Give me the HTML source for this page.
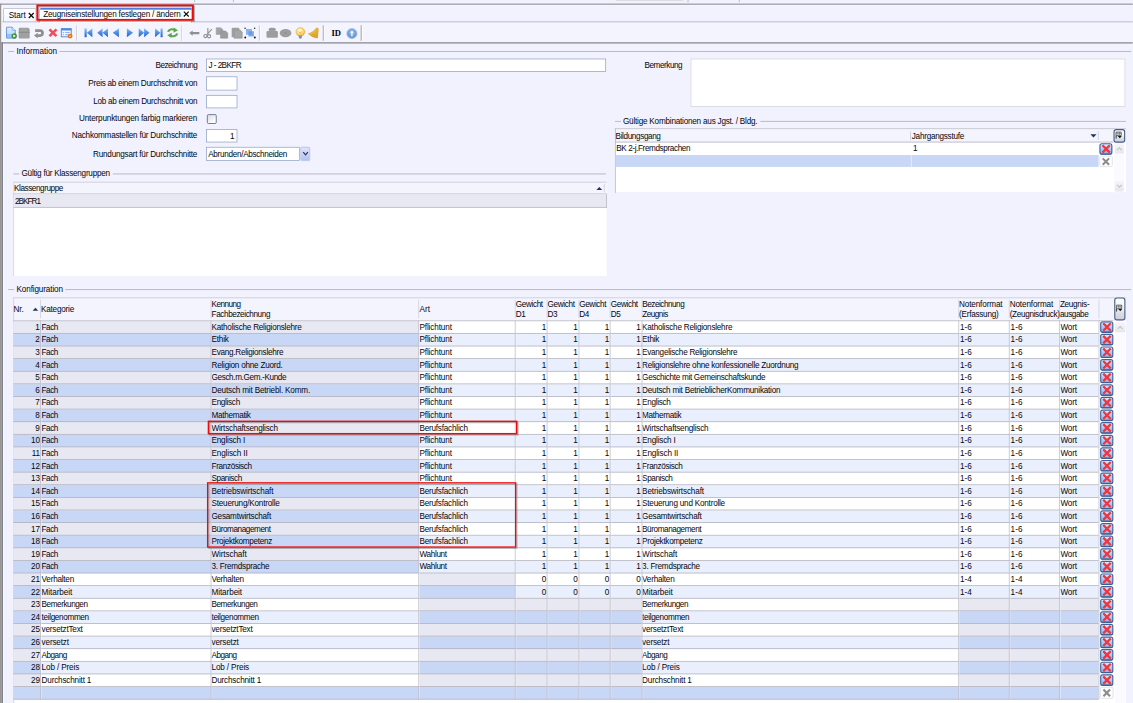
<!DOCTYPE html>
<html lang="de"><head><meta charset="utf-8"><title>Zeugniseinstellungen festlegen / ändern</title>
<style>
html,body{margin:0;padding:0;background:#f1f2fd;overflow:hidden}
body{width:1133px;height:703px;position:relative;font-family:"Liberation Sans",sans-serif;}
#app{position:absolute;left:0;top:0;width:1527.4px;height:948px;transform:scale(0.7418);transform-origin:0 0;background:#f1f2fd;overflow:hidden;font-size:11px;color:#06060c}
.a{position:absolute;box-sizing:border-box}
.t{position:absolute;white-space:pre;line-height:13px;height:13px;font-size:11px}
svg{position:absolute;overflow:visible}
</style></head><body><div id="app">
<div class="a" style="left:0px;top:5px;width:1528px;height:1px;background:#6c6c6c"></div>
<div class="a" style="left:0px;top:6px;width:1528px;height:1px;background:#a6a6aa"></div>
<div class="a" style="left:2px;top:7px;width:1526px;height:1px;background:#fbfbff"></div>
<div class="a" style="left:0px;top:5px;width:2px;height:943px;background:#989593"></div>
<div class="a" style="left:2px;top:7px;width:1px;height:50px;background:#fdfdff"></div>
<div class="a" style="left:262px;top:0px;width:1px;height:3px;background:#a9a9b3"></div>
<div class="a" style="left:314px;top:0px;width:1px;height:3px;background:#a9a9b3"></div>
<div class="a" style="left:927px;top:0px;width:1px;height:3px;background:#a9a9b3"></div>
<div class="a" style="left:996px;top:0px;width:1px;height:3px;background:#a9a9b3"></div>
<div class="a" style="left:830px;top:0px;width:91px;height:1px;background:#d3d4de"></div>
<div class="a " style="left:4.31px;top:10.65px;width:44.76px;height:19.41px;border:1px solid #a9b4cd;border-bottom:none;background:linear-gradient(#ffffff,#f3f4fd);border-radius:2px 2px 0 0"></div>
<div class="t" style="left:11.73px;top:14px;letter-spacing:-0.043px;">Start</div>
<svg style="left:37.61px;top:16.58px" width="8.22" height="7.82" viewBox="0 0 8 8"><path d="M0.6 0.6 L7.4 7.4 M7.4 0.6 L0.6 7.4" stroke="#0a0a0a" stroke-width="1.65" fill="none"/></svg>
<div class="a" style="left:3px;top:29px;width:1525px;height:1px;background:#9fa9c4"></div>
<div class="a" style="left:3px;top:30px;width:1525px;height:1px;background:#dfe3f1"></div>
<div class="a " style="left:53.11px;top:10.51px;width:205.99px;height:20.36px;border:1px solid #8fa0c4;border-bottom:none;background:#fff;border-radius:2px 2px 0 0"></div>
<div class="a " style="left:53.65px;top:10.65px;width:204.91px;height:2.7px;background:linear-gradient(#2457d6,#5c8cf0);border-radius:2px 2px 0 0"></div>
<div class="t" style="left:58.24px;top:13px;letter-spacing:-0.256px;">Zeugniseinstellungen festlegen / ändern</div>
<svg style="left:247.24px;top:14.69px" width="8.22" height="7.82" viewBox="0 0 8 8"><path d="M0.6 0.6 L7.4 7.4 M7.4 0.6 L0.6 7.4" stroke="#0a0a0a" stroke-width="1.65" fill="none"/></svg>
<div class="a" style="left:3px;top:31px;width:1525px;height:26px;background:#f3f4fe"></div>
<div class="a" style="left:2px;top:57px;width:1526px;height:1px;background:#85858d"></div>
<div class="a" style="left:2px;top:58px;width:1526px;height:1px;background:#a9a9b3"></div>
<div class="a" style="left:2px;top:57px;width:2px;height:891px;background:#767e8a"></div>
<div class="a" style="left:4px;top:59px;width:1px;height:889px;background:#fbfbff"></div>
<div class="a " style="left:102.52px;top:33.97px;width:1.21px;height:20.76px;background:#bdbdc7"></div>
<div class="a " style="left:103.8px;top:33.97px;width:1.08px;height:20.76px;background:#ffffff"></div>
<div class="a " style="left:244.07px;top:33.97px;width:1.21px;height:20.76px;background:#bdbdc7"></div>
<div class="a " style="left:245.35px;top:33.97px;width:1.08px;height:20.76px;background:#ffffff"></div>
<div class="a " style="left:349.22px;top:33.97px;width:1.21px;height:20.76px;background:#bdbdc7"></div>
<div class="a " style="left:350.5px;top:33.97px;width:1.08px;height:20.76px;background:#ffffff"></div>
<div class="a " style="left:435.49px;top:33.97px;width:1.21px;height:20.76px;background:#bdbdc7"></div>
<div class="a " style="left:436.78px;top:33.97px;width:1.08px;height:20.76px;background:#ffffff"></div>
<div class="a " style="left:486.45px;top:33.97px;width:1.21px;height:20.76px;background:#bdbdc7"></div>
<div class="a " style="left:487.73px;top:33.97px;width:1.08px;height:20.76px;background:#ffffff"></div>
<svg width="0" height="0" style="left:0;top:0"><defs><linearGradient id="gb" x1="0" y1="0" x2="0" y2="1"><stop offset="0" stop-color="#8fc0fa"/><stop offset="0.5" stop-color="#4a8ce8"/><stop offset="1" stop-color="#245fcf"/></linearGradient><linearGradient id="gp" x1="0" y1="0" x2="0" y2="1"><stop offset="0" stop-color="#e6f1fd"/><stop offset="0.6" stop-color="#c3dcf9"/><stop offset="0.62" stop-color="#86c1f5"/><stop offset="1" stop-color="#9fd0f8"/></linearGradient><radialGradient id="gh" cx="0.5" cy="0.4" r="0.6"><stop offset="0" stop-color="#a8c9ee"/><stop offset="1" stop-color="#4f86cc"/></radialGradient><radialGradient id="gl" cx="0.45" cy="0.4" r="0.6"><stop offset="0" stop-color="#fffef0"/><stop offset="0.5" stop-color="#ffe88e"/><stop offset="1" stop-color="#f6a92c"/></radialGradient><linearGradient id="gg" x1="0" y1="0" x2="1" y2="1"><stop offset="0" stop-color="#f6d25a"/><stop offset="1" stop-color="#d99a16"/></linearGradient><linearGradient id="gx" x1="0" y1="0" x2="0" y2="1"><stop offset="0" stop-color="#e2eefd"/><stop offset="0.5" stop-color="#a9caf5"/><stop offset="1" stop-color="#8ab4ef"/></linearGradient><linearGradient id="gc" x1="0" y1="0" x2="0" y2="1"><stop offset="0" stop-color="#ffffff"/><stop offset="0.4" stop-color="#f6f6fa"/><stop offset="0.7" stop-color="#dcdce4"/><stop offset="1" stop-color="#cfcfda"/></linearGradient></defs></svg>
<svg style="left:7.55px;top:36.4px" width="14.83" height="16.18" viewBox="0 0 11 12" preserveAspectRatio="none"><path d="M0.6 0.5 H6.2 L9.4 3.6 V11.4 H0.6 Z" fill="url(#gp)" stroke="#5f93df" stroke-width="0.9" stroke-linejoin="round"/><path d="M6.2 0.5 V3.6 H9.4" fill="#f4f9ff" stroke="#5f93df" stroke-width="0.7"/><circle cx="8.3" cy="9.3" r="2.5" fill="#3f9a2e"/><circle cx="8.3" cy="9.3" r="2.5" fill="none" stroke="#2d7a20" stroke-width="0.4"/><path d="M7.4 7.9 L9.8 9.3 L7.4 10.7 Z" fill="#fff"/></svg>
<svg style="left:25.48px;top:36.8px" width="15.23" height="15.23" viewBox="0 0 12 12" preserveAspectRatio="none"><path d="M1 0.2 H10 L11.8 1.6 V11 A0.8 0.8 0 0 1 11 11.8 H1 A0.8 0.8 0 0 1 0.2 11 V1 A0.8 0.8 0 0 1 1 0.2 Z" fill="#9d9d9d"/><rect x="2.2" y="0.6" width="7" height="3.6" fill="#a3a3a3"/><rect x="1.6" y="6" width="8.8" height="5.2" fill="#a0a0a0"/><rect x="0.2" y="4.7" width="11.6" height="1" fill="#8a8a8a"/></svg>
<svg style="left:45.56px;top:39.36px" width="13.48" height="11.86" viewBox="0 0 10 9" preserveAspectRatio="none"><path d="M1.0 1.7 H5.9 A2.55 2.55 0 0 1 5.9 6.8 H3.2" fill="none" stroke="#8f8f8f" stroke-width="2.7"/><path d="M-0.1 6.8 L3.6 3.9 V9.6 Z" fill="#8f8f8f"/></svg>
<svg style="left:64.71px;top:38.29px" width="12.81" height="12.4" viewBox="0 0 10 10" preserveAspectRatio="none"><path d="M1.3 1.3 L8.7 8.7 M8.7 1.3 L1.3 8.7" stroke="#f04d58" stroke-width="2.7" fill="none"/></svg>
<svg style="left:81.83px;top:38.29px" width="16.04" height="14.02" viewBox="0 0 12 10.5" preserveAspectRatio="none"><rect x="0.5" y="0.5" width="10" height="8.2" fill="#f0f5fd" stroke="#5a8ee0" stroke-width="1"/><rect x="0.5" y="0.3" width="10" height="2" fill="#4d86e0"/><path d="M2 4.4 H3.4 M4.6 4.4 H9 M2 6.6 H3.4 M4.6 6.6 H7" stroke="#7aa4e6" stroke-width="0.9"/><circle cx="9.3" cy="8" r="2.5" fill="#e67418"/><rect x="8.3" y="7.5" width="2" height="1" fill="#ffd9a8"/></svg>
<svg style="left:113.78px;top:38.29px" width="10.51" height="12.54" viewBox="0 0 8 10" preserveAspectRatio="none"><rect x="0" y="0.3" width="2.2" height="9.4" fill="url(#gb)"/><path d="M8 0.2 V9.8 L2.4 5 Z" fill="url(#gb)"/></svg>
<svg style="left:130.76px;top:38.29px" width="14.56" height="12.54" viewBox="0 0 10.8 10" preserveAspectRatio="none"><path d="M5.4 0.2 V9.8 L0 5 Z M10.8 0.2 V9.8 L5.4 5 Z" fill="url(#gb)"/></svg>
<svg style="left:152.33px;top:38.29px" width="8.36" height="12.54" viewBox="0 0 6.2 10" preserveAspectRatio="none"><path d="M6.2 0.2 V9.8 L0 5 Z" fill="url(#gb)"/></svg>
<svg style="left:171.21px;top:38.29px" width="8.36" height="12.54" viewBox="0 0 6.2 10" preserveAspectRatio="none"><path d="M0 0.2 V9.8 L6.2 5 Z" fill="url(#gb)"/></svg>
<svg style="left:187.11px;top:38.29px" width="14.56" height="12.54" viewBox="0 0 10.8 10" preserveAspectRatio="none"><path d="M0 0.2 V9.8 L5.4 5 Z M5.4 0.2 V9.8 L10.8 5 Z" fill="url(#gb)"/></svg>
<svg style="left:208.68px;top:38.29px" width="10.25" height="12.54" viewBox="0 0 8 10" preserveAspectRatio="none"><rect x="5.8" y="0.3" width="2.2" height="9.4" fill="url(#gb)"/><path d="M0 0.2 V9.8 L5.6 5 Z" fill="url(#gb)"/></svg>
<svg style="left:225.13px;top:37.48px" width="15.37" height="14.29" viewBox="0 0 12 11" preserveAspectRatio="none"><path d="M1.2 4.6 A4.4 3.2 0 0 1 8.2 2.6" fill="none" stroke="#5aa84a" stroke-width="2.2"/><path d="M7.2 0 L11.6 2.8 L7.0 5.4 Z" fill="#5aa84a"/><path d="M10.8 6.4 A4.4 3.2 0 0 1 3.8 8.4" fill="none" stroke="#5aa84a" stroke-width="2.2"/><path d="M4.8 11 L0.4 8.2 L5.0 5.6 Z" fill="#5aa84a"/></svg>
<svg style="left:254.79px;top:41.25px" width="13.75" height="7.28" viewBox="0 0 10 5.4" preserveAspectRatio="none"><path d="M0 2.7 L3.4 0 V1.6 H10 V3.8 H3.4 V5.4 Z" fill="#8f8f8f"/></svg>
<svg style="left:274.2px;top:37.48px" width="12.67" height="14.83" viewBox="0 0 9.4 11" preserveAspectRatio="none"><path d="M4.6 0.6 L4.6 6.6 M8.6 1.6 L3.4 7.4" stroke="#8f8f8f" stroke-width="1.1" fill="none"/><circle cx="2.2" cy="8.6" r="1.6" fill="none" stroke="#8f8f8f" stroke-width="1.1"/><circle cx="5.8" cy="8.8" r="1.6" fill="none" stroke="#8f8f8f" stroke-width="1.1"/></svg>
<svg style="left:291.18px;top:37.48px" width="16.45" height="14.83" viewBox="0 0 12 11" preserveAspectRatio="none"><path d="M0.3 0.3 H5 L7 2.2 V7 H0.3 Z" fill="#a3a3a3" stroke="#9d9d9d" stroke-width="0.5"/><path d="M4.6 3.6 H9.6 L11.7 5.6 V10.7 H4.6 Z" fill="#9c9c9c" stroke="#8e8e8e" stroke-width="0.5"/></svg>
<svg style="left:310.6px;top:37.48px" width="15.91" height="14.83" viewBox="0 0 12 11" preserveAspectRatio="none"><path d="M1 1.4 Q1 0.4 2 0.4 H7.6 Q8.8 0.4 8.8 1.4 V9.8 H1 Z" fill="#a0a0a0"/><path d="M3.4 2.6 H9.6 L11.7 4.6 V10.7 H3.4 Z" fill="#a6a6a6" stroke="#8e8e8e" stroke-width="0.6"/></svg>
<svg style="left:329.47px;top:37.48px" width="16.18" height="14.83" viewBox="0 0 12 11" preserveAspectRatio="none"><rect x="2.2" y="1.8" width="5.4" height="5" fill="#8db4f0" stroke="#6a9be6" stroke-width="0.5"/><rect x="4.4" y="3.8" width="5.4" height="5.2" fill="#5f92e6" opacity="0.8"/><circle cx="1" cy="0.9" r="0.75" fill="#222"/><circle cx="10.6" cy="0.9" r="0.75" fill="#222"/><circle cx="1.2" cy="10" r="0.95" fill="#111"/><circle cx="10.8" cy="10" r="0.95" fill="#111"/></svg>
<svg style="left:358.59px;top:37.48px" width="15.91" height="14.56" viewBox="0 0 12 11" preserveAspectRatio="none"><path d="M2.6 4 V2 Q2.6 0.3 4.4 0.3 H7.6 Q9.4 0.3 9.4 2 V4 Z" fill="#a2a2a2"/><path d="M1.2 3.6 H10.8 Q11.8 3.6 11.8 4.8 V9.6 Q11.8 10.6 10.8 10.6 H1.2 Q0.2 10.6 0.2 9.6 V4.8 Q0.2 3.6 1.2 3.6 Z" fill="#9d9d9d"/><rect x="2.4" y="1.4" width="7.2" height="0.8" fill="#8e8e8e"/></svg>
<svg style="left:377.46px;top:39.09px" width="15.91" height="11.32" viewBox="0 0 12 8.4" preserveAspectRatio="none"><ellipse cx="6" cy="4.2" rx="5.9" ry="4.1" fill="#9d9d9d"/><ellipse cx="6" cy="4" rx="1.1" ry="0.7" fill="#8a8a8a"/></svg>
<svg style="left:397.68px;top:36.94px" width="13.75" height="15.1" viewBox="0 0 10 11.2" preserveAspectRatio="none"><circle cx="5" cy="4.4" r="4.3" fill="url(#gl)" stroke="#f0a030" stroke-width="0.5"/><path d="M3.6 4 L5 6 L6.4 4" stroke="#f08a18" stroke-width="0.7" fill="none"/><rect x="3.4" y="8" width="3.2" height="2.2" fill="#8e949e"/><rect x="4" y="10" width="2" height="1" fill="#55606e"/></svg>
<svg style="left:415.21px;top:36.67px" width="15.37" height="15.37" viewBox="0 0 11.4 11.4" preserveAspectRatio="none"><path d="M8.6 0.6 Q10.6 0 10.4 2 L9.6 10.6 Q5 10.4 0.4 6.4 Q5.6 5 8.6 0.6 Z" fill="url(#gg)" stroke="#c98f14" stroke-width="0.5"/><ellipse cx="5.4" cy="8" rx="1.6" ry="1.1" fill="#e9b93a" stroke="#b8800e" stroke-width="0.4"/></svg>
<div class="t" style="left:447.02px;top:39.09px;font-family:'Liberation Serif',serif;font-weight:bold;font-size:11.5px;letter-spacing:-0.3px;color:#000">ID</div>
<svg style="left:466.97px;top:37.75px" width="14.83" height="14.56" viewBox="0 0 11 11" preserveAspectRatio="none"><circle cx="5.5" cy="5.5" r="5.1" fill="url(#gh)" stroke="#a9c4e8" stroke-width="0.9"/><circle cx="5.5" cy="4.1" r="1.25" fill="#f4f8ff"/><path d="M5.5 4.6 V8.4" stroke="#f4f8ff" stroke-width="1.2" fill="none"/></svg>
<div class="a" style="left:11px;top:69px;width:8px;height:1px;background:#a7a7b1"></div>
<div class="a" style="left:80px;top:69px;width:1445px;height:1px;background:#a7a7b1"></div>
<div class="t" style="left:22.24px;top:63px;letter-spacing:-0.047px;">Information</div>
<div class="a" style="left:18px;top:234px;width:8px;height:1px;background:#a7a7b1"></div>
<div class="a" style="left:152px;top:234px;width:665px;height:1px;background:#a7a7b1"></div>
<div class="t" style="left:28.98px;top:227px;letter-spacing:-0.322px;">Gültig für Klassengruppen</div>
<div class="a" style="left:829px;top:163px;width:8px;height:1px;background:#a7a7b1"></div>
<div class="a" style="left:1025px;top:163px;width:493px;height:1px;background:#a7a7b1"></div>
<div class="t" style="left:839.85px;top:157px;letter-spacing:-0.296px;">Gültige Kombinationen aus Jgst. / Bldg.</div>
<div class="a" style="left:11px;top:390px;width:8px;height:1px;background:#a7a7b1"></div>
<div class="a" style="left:88px;top:390px;width:1437px;height:1px;background:#a7a7b1"></div>
<div class="t" style="left:22.24px;top:384px;letter-spacing:-0.172px;">Konfiguration</div>
<div class="t" style="right:1261.32px;top:82px;letter-spacing:-0.641px;">Bezeichnung</div>
<div class="a " style="left:277.57px;top:78.73px;width:539.9px;height:18.47px;border:1px solid #8ea2c6;background:#fff;"></div>
<div class="t" style="left:281.21px;top:82px;letter-spacing:-0.776px;">J - 2BKFR</div>
<div class="t" style="right:1261.59px;top:106px;letter-spacing:-0.374px;">Preis ab einem Durchschnitt von</div>
<div class="a " style="left:277.57px;top:103.26px;width:42.6px;height:18.33px;border:1px solid #8ea2c6;background:#fff;"></div>
<div class="t" style="right:1261.56px;top:130px;letter-spacing:-0.401px;">Lob ab einem Durchschnitt von</div>
<div class="a " style="left:277.57px;top:127.8px;width:42.6px;height:18.2px;border:1px solid #8ea2c6;background:#fff;"></div>
<div class="t" style="right:1261.72px;top:153px;letter-spacing:-0.244px;">Unterpunktungen farbig markieren</div>
<div class="a " style="left:279.19px;top:153.68px;width:12.94px;height:12.94px;border:1px solid #41567f;border-radius:2px;background:linear-gradient(135deg,#d9d9e0,#ffffff 80%)"></div>
<div class="t" style="right:1261.65px;top:176px;letter-spacing:-0.317px;">Nachkommastellen für Durchschnitte</div>
<div class="a " style="left:277.57px;top:174.04px;width:42.6px;height:18.33px;border:1px solid #8ea2c6;background:#fff;"></div>
<div class="t" style="right:1211.14px;top:177px;letter-spacing:0px;">1</div>
<div class="t" style="right:1261.66px;top:202px;letter-spacing:-0.307px;">Rundungsart für Durchschnitte</div>
<div class="a " style="left:277.57px;top:198.44px;width:126.58px;height:18.2px;border:1px solid #8ea2c6;background:#fff;"></div>
<div class="t" style="left:280.67px;top:202px;letter-spacing:-0.407px;">Abrunden/Abschneiden</div>
<div class="a " style="left:404.96px;top:198.44px;width:13.48px;height:18.2px;border:1px solid #a9b7e2;background:linear-gradient(#dde4f9,#b4c2ee);border-radius:1.5px"></div>
<svg style="left:407.93px;top:204.37px" width="7.82" height="6.2" viewBox="0 0 8 6"><path d="M0.8 1 L4 4.6 L7.2 1" stroke="#22345f" stroke-width="1.6" fill="none"/></svg>
<div class="t" style="right:607.81px;top:82px;letter-spacing:-0.61px;">Bemerkung</div>
<div class="a " style="left:930.57px;top:78.73px;width:586.82px;height:65.38px;border:1px solid #d0d1dc;background:#fff"></div>
<div class="a " style="left:17.93px;top:244.81px;width:799.81px;height:127.66px;background:#fff"></div>
<div class="a " style="left:17.93px;top:244.81px;width:799.81px;height:16.72px;background:#f3f4fe"></div>
<div class="a" style="left:18px;top:245px;width:800px;height:1px;background:#c4c4cd"></div>
<div class="a" style="left:18px;top:245px;width:1px;height:127px;background:#d2d2da"></div>
<div class="a" style="left:18px;top:261px;width:800px;height:1px;background:#aeaeb9"></div>
<div class="t" style="left:18.87px;top:247px;letter-spacing:-0.57px;">Klassengruppe</div>
<svg style="left:804.26px;top:251.55px" width="7.82" height="4.31" viewBox="0 0 10 5"><path d="M0 5 L5 0 L10 5 Z" fill="#1d3557"/></svg>
<div class="a" style="left:814px;top:248px;width:1px;height:11px;background:#c9c9d2"></div>
<div class="a " style="left:18.6px;top:262.2px;width:798.6px;height:16.85px;background:#e8e8f2"></div>
<div class="a" style="left:18px;top:279px;width:800px;height:1px;background:#aeaeb9"></div>
<div class="a" style="left:817px;top:262px;width:1px;height:18px;background:#aeaeb9"></div>
<div class="t" style="left:20.22px;top:265px;letter-spacing:-1.321px;">2BKFR1</div>
<div class="a " style="left:829.33px;top:173.23px;width:688.6px;height:86.28px;background:#fff"></div>
<div class="a " style="left:829.33px;top:173.23px;width:671.61px;height:18.6px;background:#f3f4fe"></div>
<div class="a " style="left:1500.94px;top:173.23px;width:16.99px;height:19.55px;background:#f1f2fd"></div>
<div class="a" style="left:829px;top:173px;width:689px;height:1px;background:#bcbcc6"></div>
<div class="a" style="left:829px;top:173px;width:1px;height:87px;background:#b4b4be"></div>
<div class="a" style="left:829px;top:191px;width:672px;height:1px;background:#aeaeb9"></div>
<div class="t" style="left:829.87px;top:177px;letter-spacing:-0.507px;">Bildungsgang</div>
<div class="a" style="left:1227px;top:177px;width:1px;height:12px;background:#c9c9d2"></div>
<div class="t" style="left:1229.17px;top:177px;letter-spacing:-0.342px;">Jahrgangsstufe</div>
<svg style="left:1469.53px;top:181.05px" width="8.22" height="4.31" viewBox="0 0 10 5"><path d="M0 0 L5 5 L10 0 Z" fill="#1d3557"/></svg>
<div class="a" style="left:1480px;top:177px;width:1px;height:12px;background:#c9c9d2"></div>
<div class="t" style="left:830.68px;top:194px;letter-spacing:-0.522px;">BK 2-j.Fremdsprachen</div>
<div class="t" style="left:1230.79px;top:194px;letter-spacing:0px;">1</div>
<div class="a " style="left:830.28px;top:209.49px;width:650.44px;height:15.77px;background:#c9d7f6"></div>
<div class="a" style="left:1228px;top:209px;width:1px;height:16px;background:#eef1fc"></div>
<svg style="left:1482.07px;top:192.77px" width="17.66" height="16.04" viewBox="0 0 17.66 16.04"><rect x="0.8" y="0.8" width="16.06" height="14.14" rx="2.6" fill="url(#gx)" stroke="#42639a" stroke-width="1.6"/><path d="M1.6 14.54 H16.06" stroke="#3b5a8f" stroke-width="1.2"/><path d="M4.15 2.73 L14.13 12.83 M14.13 2.73 L4.15 12.83" stroke="#f2343f" stroke-width="3.1" fill="none"/></svg>
<div class="a" style="left:1482.34px;top:210.3px;width:17.26px;height:15.1px;border:1px solid #dcdce2;border-radius:2px;background:#fdfdfd"><svg style="left:1.8px;top:0.8px" width="11.66" height="11.5" viewBox="0 0 10 10" preserveAspectRatio="none"><path d="M1.3 1.3 L8.7 8.7 M8.7 1.3 L1.3 8.7" stroke="#8c8c8c" stroke-width="2.4" fill="none"/></svg></div>
<div class="a " style="left:1502.29px;top:192.77px;width:12.94px;height:65.79px;background:#fafaff"></div>
<div class="a " style="left:1502.83px;top:193.31px;width:11.86px;height:14.15px;background:linear-gradient(#f6f6fa,#e6e6ec);border-radius:1.5px"></div>
<svg style="left:1504.72px;top:197.69px" width="8.09" height="5.66" viewBox="0 0 8 5.6"><path d="M0.8 4.4 L4 1.2 L7.2 4.4" stroke="#c3c3c8" stroke-width="1.5" fill="none"/></svg>
<div class="a " style="left:1502.83px;top:243.87px;width:11.86px;height:14.15px;background:linear-gradient(#f6f6fa,#e6e6ec);border-radius:1.5px"></div>
<svg style="left:1504.72px;top:248.25px" width="8.09" height="5.66" viewBox="0 0 8 5.6"><path d="M0.8 1.2 L4 4.4 L7.2 1.2" stroke="#c3c3c8" stroke-width="1.5" fill="none"/></svg>
<svg style="left:1500.67px;top:173.9px" width="15.91" height="18.47" viewBox="0 0 15.91 18.47"><rect x="0.8" y="0.8" width="14.31" height="16.87" rx="3" fill="url(#gc)" stroke="#465d85" stroke-width="1.5"/><g transform="translate(2.55,3.63) scale(0.88)"><path d="M1 0.5 H9 V6 H1 Z" fill="#fff" stroke="#222" stroke-width="1"/><path d="M1 3 H9 M4 0.5 V6 M6.5 0.5 V6" stroke="#333" stroke-width="0.7"/><path d="M1.2 6 V10.3" stroke="#111" stroke-width="1.3"/><path d="M3.8 6.6 H9.8 L6.8 9.8 Z" fill="#111"/></g></svg>
<div class="a " style="left:17.93px;top:401.05px;width:1500.54px;height:546.64px;background:#fff"></div>
<div class="a " style="left:17.93px;top:401.05px;width:1483.28px;height:31.45px;background:#f3f4fe"></div>
<div class="a " style="left:1501.21px;top:401.05px;width:17.26px;height:32.35px;background:#f1f2fd"></div>
<div class="a " style="left:1518.47px;top:400.38px;width:8.9px;height:547.32px;background:#f1f2fd"></div>
<div class="a" style="left:18px;top:401px;width:1500px;height:1px;background:#c4c4cd"></div>
<div class="a" style="left:18px;top:401px;width:1px;height:547px;background:#c9c9d2"></div>
<div class="a" style="left:54px;top:404px;width:1px;height:25px;background:#cdcdd6"></div>
<div class="a" style="left:284px;top:404px;width:1px;height:25px;background:#cdcdd6"></div>
<div class="a" style="left:564px;top:404px;width:1px;height:25px;background:#cdcdd6"></div>
<div class="a" style="left:694px;top:404px;width:1px;height:25px;background:#cdcdd6"></div>
<div class="a" style="left:737px;top:404px;width:1px;height:25px;background:#cdcdd6"></div>
<div class="a" style="left:780px;top:404px;width:1px;height:25px;background:#cdcdd6"></div>
<div class="a" style="left:822px;top:404px;width:1px;height:25px;background:#cdcdd6"></div>
<div class="a" style="left:865px;top:404px;width:1px;height:25px;background:#cdcdd6"></div>
<div class="a" style="left:1292px;top:404px;width:1px;height:25px;background:#cdcdd6"></div>
<div class="a" style="left:1360px;top:404px;width:1px;height:25px;background:#cdcdd6"></div>
<div class="a" style="left:1428px;top:404px;width:1px;height:25px;background:#cdcdd6"></div>
<div class="a" style="left:1481px;top:404px;width:1px;height:25px;background:#cdcdd6"></div>
<div class="t" style="left:18.06px;top:411px;letter-spacing:-0.043px;">Nr.</div>
<svg style="left:43.95px;top:415.21px" width="7.55" height="3.77" viewBox="0 0 10 5"><path d="M0 5 L5 0 L10 5 Z" fill="#1d3557"/></svg>
<div class="t" style="left:55.27px;top:411px;letter-spacing:-0.297px;">Kategorie</div>
<div class="t" style="left:285.25px;top:404px;letter-spacing:-0.714px;">Kennung</div>
<div class="t" style="left:285.25px;top:417px;letter-spacing:-0.538px;">Fachbezeichnung</div>
<div class="t" style="left:565.52px;top:411px;letter-spacing:0.07px;">Art</div>
<div class="t" style="left:695.34px;top:404px;letter-spacing:-0.483px;">Gewicht</div>
<div class="t" style="left:695.34px;top:417px;letter-spacing:-0.491px;">D1</div>
<div class="t" style="left:738.2px;top:404px;letter-spacing:-0.483px;">Gewicht</div>
<div class="t" style="left:738.2px;top:417px;letter-spacing:-0.491px;">D3</div>
<div class="t" style="left:780.8px;top:404px;letter-spacing:-0.483px;">Gewicht</div>
<div class="t" style="left:780.8px;top:417px;letter-spacing:-0.491px;">D4</div>
<div class="t" style="left:823.4px;top:404px;letter-spacing:-0.483px;">Gewicht</div>
<div class="t" style="left:823.4px;top:417px;letter-spacing:-0.491px;">D5</div>
<div class="t" style="left:865.87px;top:404px;letter-spacing:-0.641px;">Bezeichnung</div>
<div class="t" style="left:865.87px;top:417px;letter-spacing:-0.687px;">Zeugnis</div>
<div class="t" style="left:1292.8px;top:404px;letter-spacing:-0.179px;">Notenformat</div>
<div class="t" style="left:1292.8px;top:417px;letter-spacing:-0.334px;">(Erfassung)</div>
<div class="t" style="left:1361.15px;top:404px;letter-spacing:-0.179px;">Notenformat</div>
<div class="t" style="left:1361.15px;top:417px;letter-spacing:-0.432px;">(Zeugnisdruck)</div>
<div class="t" style="left:1428.82px;top:404px;letter-spacing:-0.386px;">Zeugnis-</div>
<div class="t" style="left:1428.82px;top:417px;letter-spacing:-0.547px;">ausgabe</div>
<svg style="left:1502.16px;top:401.46px" width="15.23" height="31.01" viewBox="0 0 15.23 31.01"><rect x="0.8" y="0.8" width="13.63" height="29.41" rx="3" fill="url(#gc)" stroke="#465d85" stroke-width="1.5"/><g transform="translate(2.21,9.91) scale(0.88)"><path d="M1 0.5 H9 V6 H1 Z" fill="#fff" stroke="#222" stroke-width="1"/><path d="M1 3 H9 M4 0.5 V6 M6.5 0.5 V6" stroke="#333" stroke-width="0.7"/><path d="M1.2 6 V10.3" stroke="#111" stroke-width="1.3"/><path d="M3.8 6.6 H9.8 L6.8 9.8 Z" fill="#111"/></g></svg>
<div class="a " style="left:17.93px;top:432.5px;width:546.64px;height:17.0px;background:#e8e8f2"></div>
<div class="a " style="left:564.57px;top:432.5px;width:916.82px;height:17.0px;background:#ffffff"></div>
<div class="t" style="right:1473.61px;top:435px;letter-spacing:0px;">1</div>
<div class="t" style="left:56.08px;top:435px;letter-spacing:-0.661px;">Fach</div>
<div class="t" style="left:285.12px;top:435px;letter-spacing:-0.314px;">Katholische Religionslehre</div>
<div class="t" style="left:565.38px;top:435px;letter-spacing:-0.153px;">Pflichtunt</div>
<div class="t" style="right:791.08px;top:435px;letter-spacing:0px;">1</div>
<div class="t" style="right:748.48px;top:435px;letter-spacing:0px;">1</div>
<div class="t" style="right:705.88px;top:435px;letter-spacing:0px;">1</div>
<div class="t" style="right:663.56px;top:435px;letter-spacing:0px;">1</div>
<div class="t" style="left:865.6px;top:435px;letter-spacing:-0.314px;">Katholische Religionslehre</div>
<div class="t" style="left:1294.15px;top:435px;letter-spacing:0.079px;">1-6</div>
<div class="t" style="left:1362.36px;top:435px;letter-spacing:0.079px;">1-6</div>
<div class="t" style="left:1429.5px;top:435px;letter-spacing:-0.225px;">Wort</div>
<svg style="left:1482.88px;top:433.11px" width="17.93" height="16.06" viewBox="0 0 17.93 16.06"><rect x="0.8" y="0.8" width="16.33" height="14.16" rx="2.6" fill="url(#gx)" stroke="#42639a" stroke-width="1.6"/><path d="M1.6 14.56 H16.33" stroke="#3b5a8f" stroke-width="1.2"/><path d="M4.21 2.73 L14.34 12.85 M14.34 2.73 L4.21 12.85" stroke="#f2343f" stroke-width="3.1" fill="none"/></svg>
<div class="a " style="left:17.93px;top:449.5px;width:546.64px;height:17.0px;background:#c9d7f6"></div>
<div class="a " style="left:564.57px;top:449.5px;width:916.82px;height:17.0px;background:#e9effd"></div>
<div class="t" style="right:1473.61px;top:451px;letter-spacing:0px;">2</div>
<div class="t" style="left:56.08px;top:451px;letter-spacing:-0.661px;">Fach</div>
<div class="t" style="left:285.12px;top:451px;letter-spacing:-0.265px;">Ethik</div>
<div class="t" style="left:565.38px;top:451px;letter-spacing:-0.153px;">Pflichtunt</div>
<div class="t" style="right:791.08px;top:451px;letter-spacing:0px;">1</div>
<div class="t" style="right:748.48px;top:451px;letter-spacing:0px;">1</div>
<div class="t" style="right:705.88px;top:451px;letter-spacing:0px;">1</div>
<div class="t" style="right:663.56px;top:451px;letter-spacing:0px;">1</div>
<div class="t" style="left:865.6px;top:451px;letter-spacing:-0.265px;">Ethik</div>
<div class="t" style="left:1294.15px;top:451px;letter-spacing:0.079px;">1-6</div>
<div class="t" style="left:1362.36px;top:451px;letter-spacing:0.079px;">1-6</div>
<div class="t" style="left:1429.5px;top:451px;letter-spacing:-0.225px;">Wort</div>
<svg style="left:1482.88px;top:450.11px" width="17.93" height="16.06" viewBox="0 0 17.93 16.06"><rect x="0.8" y="0.8" width="16.33" height="14.16" rx="2.6" fill="url(#gx)" stroke="#42639a" stroke-width="1.6"/><path d="M1.6 14.56 H16.33" stroke="#3b5a8f" stroke-width="1.2"/><path d="M4.21 2.73 L14.34 12.85 M14.34 2.73 L4.21 12.85" stroke="#f2343f" stroke-width="3.1" fill="none"/></svg>
<div class="a " style="left:17.93px;top:466.5px;width:546.64px;height:17.0px;background:#e8e8f2"></div>
<div class="a " style="left:564.57px;top:466.5px;width:916.82px;height:17.0px;background:#ffffff"></div>
<div class="t" style="right:1473.61px;top:469px;letter-spacing:0px;">3</div>
<div class="t" style="left:56.08px;top:469px;letter-spacing:-0.661px;">Fach</div>
<div class="t" style="left:285.12px;top:469px;letter-spacing:-0.364px;">Evang.Religionslehre</div>
<div class="t" style="left:565.38px;top:469px;letter-spacing:-0.153px;">Pflichtunt</div>
<div class="t" style="right:791.08px;top:469px;letter-spacing:0px;">1</div>
<div class="t" style="right:748.48px;top:469px;letter-spacing:0px;">1</div>
<div class="t" style="right:705.88px;top:469px;letter-spacing:0px;">1</div>
<div class="t" style="right:663.56px;top:469px;letter-spacing:0px;">1</div>
<div class="t" style="left:865.6px;top:469px;letter-spacing:-0.364px;">Evangelische Religionslehre</div>
<div class="t" style="left:1294.15px;top:469px;letter-spacing:0.079px;">1-6</div>
<div class="t" style="left:1362.36px;top:469px;letter-spacing:0.079px;">1-6</div>
<div class="t" style="left:1429.5px;top:469px;letter-spacing:-0.225px;">Wort</div>
<svg style="left:1482.88px;top:467.11px" width="17.93" height="16.06" viewBox="0 0 17.93 16.06"><rect x="0.8" y="0.8" width="16.33" height="14.16" rx="2.6" fill="url(#gx)" stroke="#42639a" stroke-width="1.6"/><path d="M1.6 14.56 H16.33" stroke="#3b5a8f" stroke-width="1.2"/><path d="M4.21 2.73 L14.34 12.85 M14.34 2.73 L4.21 12.85" stroke="#f2343f" stroke-width="3.1" fill="none"/></svg>
<div class="a " style="left:17.93px;top:483.5px;width:546.64px;height:17.0px;background:#c9d7f6"></div>
<div class="a " style="left:564.57px;top:483.5px;width:916.82px;height:17.0px;background:#e9effd"></div>
<div class="t" style="right:1473.61px;top:486px;letter-spacing:0px;">4</div>
<div class="t" style="left:56.08px;top:486px;letter-spacing:-0.661px;">Fach</div>
<div class="t" style="left:285.12px;top:486px;letter-spacing:-0.311px;">Religion ohne Zuord.</div>
<div class="t" style="left:565.38px;top:486px;letter-spacing:-0.153px;">Pflichtunt</div>
<div class="t" style="right:791.08px;top:486px;letter-spacing:0px;">1</div>
<div class="t" style="right:748.48px;top:486px;letter-spacing:0px;">1</div>
<div class="t" style="right:705.88px;top:486px;letter-spacing:0px;">1</div>
<div class="t" style="right:663.56px;top:486px;letter-spacing:0px;">1</div>
<div class="t" style="left:865.6px;top:486px;letter-spacing:-0.356px;">Religionslehre ohne konfessionelle Zuordnung</div>
<div class="t" style="left:1294.15px;top:486px;letter-spacing:0.079px;">1-6</div>
<div class="t" style="left:1362.36px;top:486px;letter-spacing:0.079px;">1-6</div>
<div class="t" style="left:1429.5px;top:486px;letter-spacing:-0.225px;">Wort</div>
<svg style="left:1482.88px;top:484.11px" width="17.93" height="16.06" viewBox="0 0 17.93 16.06"><rect x="0.8" y="0.8" width="16.33" height="14.16" rx="2.6" fill="url(#gx)" stroke="#42639a" stroke-width="1.6"/><path d="M1.6 14.56 H16.33" stroke="#3b5a8f" stroke-width="1.2"/><path d="M4.21 2.73 L14.34 12.85 M14.34 2.73 L4.21 12.85" stroke="#f2343f" stroke-width="3.1" fill="none"/></svg>
<div class="a " style="left:17.93px;top:500.5px;width:546.64px;height:17.0px;background:#e8e8f2"></div>
<div class="a " style="left:564.57px;top:500.5px;width:916.82px;height:17.0px;background:#ffffff"></div>
<div class="t" style="right:1473.61px;top:502px;letter-spacing:0px;">5</div>
<div class="t" style="left:56.08px;top:502px;letter-spacing:-0.661px;">Fach</div>
<div class="t" style="left:285.12px;top:502px;letter-spacing:-0.487px;">Gesch.m.Gem.-Kunde</div>
<div class="t" style="left:565.38px;top:502px;letter-spacing:-0.153px;">Pflichtunt</div>
<div class="t" style="right:791.08px;top:502px;letter-spacing:0px;">1</div>
<div class="t" style="right:748.48px;top:502px;letter-spacing:0px;">1</div>
<div class="t" style="right:705.88px;top:502px;letter-spacing:0px;">1</div>
<div class="t" style="right:663.56px;top:502px;letter-spacing:0px;">1</div>
<div class="t" style="left:865.6px;top:502px;letter-spacing:-0.401px;">Geschichte mit Gemeinschaftskunde</div>
<div class="t" style="left:1294.15px;top:502px;letter-spacing:0.079px;">1-6</div>
<div class="t" style="left:1362.36px;top:502px;letter-spacing:0.079px;">1-6</div>
<div class="t" style="left:1429.5px;top:502px;letter-spacing:-0.225px;">Wort</div>
<svg style="left:1482.88px;top:501.11px" width="17.93" height="16.06" viewBox="0 0 17.93 16.06"><rect x="0.8" y="0.8" width="16.33" height="14.16" rx="2.6" fill="url(#gx)" stroke="#42639a" stroke-width="1.6"/><path d="M1.6 14.56 H16.33" stroke="#3b5a8f" stroke-width="1.2"/><path d="M4.21 2.73 L14.34 12.85 M14.34 2.73 L4.21 12.85" stroke="#f2343f" stroke-width="3.1" fill="none"/></svg>
<div class="a " style="left:17.93px;top:517.5px;width:546.64px;height:17.0px;background:#c9d7f6"></div>
<div class="a " style="left:564.57px;top:517.5px;width:916.82px;height:17.0px;background:#e9effd"></div>
<div class="t" style="right:1473.61px;top:520px;letter-spacing:0px;">6</div>
<div class="t" style="left:56.08px;top:520px;letter-spacing:-0.661px;">Fach</div>
<div class="t" style="left:285.12px;top:520px;letter-spacing:-0.244px;">Deutsch mit Betriebl. Komm.</div>
<div class="t" style="left:565.38px;top:520px;letter-spacing:-0.153px;">Pflichtunt</div>
<div class="t" style="right:791.08px;top:520px;letter-spacing:0px;">1</div>
<div class="t" style="right:748.48px;top:520px;letter-spacing:0px;">1</div>
<div class="t" style="right:705.88px;top:520px;letter-spacing:0px;">1</div>
<div class="t" style="right:663.56px;top:520px;letter-spacing:0px;">1</div>
<div class="t" style="left:865.6px;top:520px;letter-spacing:-0.309px;">Deutsch mit BetrieblicherKommunikation</div>
<div class="t" style="left:1294.15px;top:520px;letter-spacing:0.079px;">1-6</div>
<div class="t" style="left:1362.36px;top:520px;letter-spacing:0.079px;">1-6</div>
<div class="t" style="left:1429.5px;top:520px;letter-spacing:-0.225px;">Wort</div>
<svg style="left:1482.88px;top:518.11px" width="17.93" height="16.06" viewBox="0 0 17.93 16.06"><rect x="0.8" y="0.8" width="16.33" height="14.16" rx="2.6" fill="url(#gx)" stroke="#42639a" stroke-width="1.6"/><path d="M1.6 14.56 H16.33" stroke="#3b5a8f" stroke-width="1.2"/><path d="M4.21 2.73 L14.34 12.85 M14.34 2.73 L4.21 12.85" stroke="#f2343f" stroke-width="3.1" fill="none"/></svg>
<div class="a " style="left:17.93px;top:534.5px;width:546.64px;height:17.0px;background:#e8e8f2"></div>
<div class="a " style="left:564.57px;top:534.5px;width:916.82px;height:17.0px;background:#ffffff"></div>
<div class="t" style="right:1473.61px;top:536px;letter-spacing:0px;">7</div>
<div class="t" style="left:56.08px;top:536px;letter-spacing:-0.661px;">Fach</div>
<div class="t" style="left:285.12px;top:536px;letter-spacing:-0.415px;">Englisch</div>
<div class="t" style="left:565.38px;top:536px;letter-spacing:-0.153px;">Pflichtunt</div>
<div class="t" style="right:791.08px;top:536px;letter-spacing:0px;">1</div>
<div class="t" style="right:748.48px;top:536px;letter-spacing:0px;">1</div>
<div class="t" style="right:705.88px;top:536px;letter-spacing:0px;">1</div>
<div class="t" style="right:663.56px;top:536px;letter-spacing:0px;">1</div>
<div class="t" style="left:865.6px;top:536px;letter-spacing:-0.415px;">Englisch</div>
<div class="t" style="left:1294.15px;top:536px;letter-spacing:0.079px;">1-6</div>
<div class="t" style="left:1362.36px;top:536px;letter-spacing:0.079px;">1-6</div>
<div class="t" style="left:1429.5px;top:536px;letter-spacing:-0.225px;">Wort</div>
<svg style="left:1482.88px;top:535.11px" width="17.93" height="16.06" viewBox="0 0 17.93 16.06"><rect x="0.8" y="0.8" width="16.33" height="14.16" rx="2.6" fill="url(#gx)" stroke="#42639a" stroke-width="1.6"/><path d="M1.6 14.56 H16.33" stroke="#3b5a8f" stroke-width="1.2"/><path d="M4.21 2.73 L14.34 12.85 M14.34 2.73 L4.21 12.85" stroke="#f2343f" stroke-width="3.1" fill="none"/></svg>
<div class="a " style="left:17.93px;top:551.5px;width:546.64px;height:17.0px;background:#c9d7f6"></div>
<div class="a " style="left:564.57px;top:551.5px;width:916.82px;height:17.0px;background:#e9effd"></div>
<div class="t" style="right:1473.61px;top:553px;letter-spacing:0px;">8</div>
<div class="t" style="left:56.08px;top:553px;letter-spacing:-0.661px;">Fach</div>
<div class="t" style="left:285.12px;top:553px;letter-spacing:-0.41px;">Mathematik</div>
<div class="t" style="left:565.38px;top:553px;letter-spacing:-0.153px;">Pflichtunt</div>
<div class="t" style="right:791.08px;top:553px;letter-spacing:0px;">1</div>
<div class="t" style="right:748.48px;top:553px;letter-spacing:0px;">1</div>
<div class="t" style="right:705.88px;top:553px;letter-spacing:0px;">1</div>
<div class="t" style="right:663.56px;top:553px;letter-spacing:0px;">1</div>
<div class="t" style="left:865.6px;top:553px;letter-spacing:-0.41px;">Mathematik</div>
<div class="t" style="left:1294.15px;top:553px;letter-spacing:0.079px;">1-6</div>
<div class="t" style="left:1362.36px;top:553px;letter-spacing:0.079px;">1-6</div>
<div class="t" style="left:1429.5px;top:553px;letter-spacing:-0.225px;">Wort</div>
<svg style="left:1482.88px;top:552.11px" width="17.93" height="16.06" viewBox="0 0 17.93 16.06"><rect x="0.8" y="0.8" width="16.33" height="14.16" rx="2.6" fill="url(#gx)" stroke="#42639a" stroke-width="1.6"/><path d="M1.6 14.56 H16.33" stroke="#3b5a8f" stroke-width="1.2"/><path d="M4.21 2.73 L14.34 12.85 M14.34 2.73 L4.21 12.85" stroke="#f2343f" stroke-width="3.1" fill="none"/></svg>
<div class="a " style="left:17.93px;top:568.5px;width:546.64px;height:17.0px;background:#e8e8f2"></div>
<div class="a " style="left:564.57px;top:568.5px;width:916.82px;height:17.0px;background:#ffffff"></div>
<div class="t" style="right:1473.61px;top:571px;letter-spacing:0px;">9</div>
<div class="t" style="left:56.08px;top:571px;letter-spacing:-0.661px;">Fach</div>
<div class="t" style="left:285.12px;top:571px;letter-spacing:-0.285px;">Wirtschaftsenglisch</div>
<div class="t" style="left:565.38px;top:571px;letter-spacing:-0.283px;">Berufsfachlich</div>
<div class="t" style="right:791.08px;top:571px;letter-spacing:0px;">1</div>
<div class="t" style="right:748.48px;top:571px;letter-spacing:0px;">1</div>
<div class="t" style="right:705.88px;top:571px;letter-spacing:0px;">1</div>
<div class="t" style="right:663.56px;top:571px;letter-spacing:0px;">1</div>
<div class="t" style="left:865.6px;top:571px;letter-spacing:-0.285px;">Wirtschaftsenglisch</div>
<div class="t" style="left:1294.15px;top:571px;letter-spacing:0.079px;">1-6</div>
<div class="t" style="left:1362.36px;top:571px;letter-spacing:0.079px;">1-6</div>
<div class="t" style="left:1429.5px;top:571px;letter-spacing:-0.225px;">Wort</div>
<svg style="left:1482.88px;top:569.11px" width="17.93" height="16.06" viewBox="0 0 17.93 16.06"><rect x="0.8" y="0.8" width="16.33" height="14.16" rx="2.6" fill="url(#gx)" stroke="#42639a" stroke-width="1.6"/><path d="M1.6 14.56 H16.33" stroke="#3b5a8f" stroke-width="1.2"/><path d="M4.21 2.73 L14.34 12.85 M14.34 2.73 L4.21 12.85" stroke="#f2343f" stroke-width="3.1" fill="none"/></svg>
<div class="a " style="left:17.93px;top:585.5px;width:546.64px;height:17.0px;background:#c9d7f6"></div>
<div class="a " style="left:564.57px;top:585.5px;width:916.82px;height:17.0px;background:#e9effd"></div>
<div class="t" style="right:1473.49px;top:587px;letter-spacing:-0.123px;">10</div>
<div class="t" style="left:56.08px;top:587px;letter-spacing:-0.661px;">Fach</div>
<div class="t" style="left:285.12px;top:587px;letter-spacing:-0.252px;">Englisch I</div>
<div class="t" style="left:565.38px;top:587px;letter-spacing:-0.153px;">Pflichtunt</div>
<div class="t" style="right:791.08px;top:587px;letter-spacing:0px;">1</div>
<div class="t" style="right:748.48px;top:587px;letter-spacing:0px;">1</div>
<div class="t" style="right:705.88px;top:587px;letter-spacing:0px;">1</div>
<div class="t" style="right:663.56px;top:587px;letter-spacing:0px;">1</div>
<div class="t" style="left:865.6px;top:587px;letter-spacing:-0.252px;">Englisch I</div>
<div class="t" style="left:1294.15px;top:587px;letter-spacing:0.079px;">1-6</div>
<div class="t" style="left:1362.36px;top:587px;letter-spacing:0.079px;">1-6</div>
<div class="t" style="left:1429.5px;top:587px;letter-spacing:-0.225px;">Wort</div>
<svg style="left:1482.88px;top:586.11px" width="17.93" height="16.06" viewBox="0 0 17.93 16.06"><rect x="0.8" y="0.8" width="16.33" height="14.16" rx="2.6" fill="url(#gx)" stroke="#42639a" stroke-width="1.6"/><path d="M1.6 14.56 H16.33" stroke="#3b5a8f" stroke-width="1.2"/><path d="M4.21 2.73 L14.34 12.85 M14.34 2.73 L4.21 12.85" stroke="#f2343f" stroke-width="3.1" fill="none"/></svg>
<div class="a " style="left:17.93px;top:602.5px;width:546.64px;height:17.0px;background:#e8e8f2"></div>
<div class="a " style="left:564.57px;top:602.5px;width:916.82px;height:17.0px;background:#ffffff"></div>
<div class="t" style="right:1473.49px;top:605px;letter-spacing:-0.123px;">11</div>
<div class="t" style="left:56.08px;top:605px;letter-spacing:-0.661px;">Fach</div>
<div class="t" style="left:285.12px;top:605px;letter-spacing:-0.193px;">Englisch II</div>
<div class="t" style="left:565.38px;top:605px;letter-spacing:-0.153px;">Pflichtunt</div>
<div class="t" style="right:791.08px;top:605px;letter-spacing:0px;">1</div>
<div class="t" style="right:748.48px;top:605px;letter-spacing:0px;">1</div>
<div class="t" style="right:705.88px;top:605px;letter-spacing:0px;">1</div>
<div class="t" style="right:663.56px;top:605px;letter-spacing:0px;">1</div>
<div class="t" style="left:865.6px;top:605px;letter-spacing:-0.193px;">Englisch II</div>
<div class="t" style="left:1294.15px;top:605px;letter-spacing:0.079px;">1-6</div>
<div class="t" style="left:1362.36px;top:605px;letter-spacing:0.079px;">1-6</div>
<div class="t" style="left:1429.5px;top:605px;letter-spacing:-0.225px;">Wort</div>
<svg style="left:1482.88px;top:603.11px" width="17.93" height="16.06" viewBox="0 0 17.93 16.06"><rect x="0.8" y="0.8" width="16.33" height="14.16" rx="2.6" fill="url(#gx)" stroke="#42639a" stroke-width="1.6"/><path d="M1.6 14.56 H16.33" stroke="#3b5a8f" stroke-width="1.2"/><path d="M4.21 2.73 L14.34 12.85 M14.34 2.73 L4.21 12.85" stroke="#f2343f" stroke-width="3.1" fill="none"/></svg>
<div class="a " style="left:17.93px;top:619.5px;width:546.64px;height:17.0px;background:#c9d7f6"></div>
<div class="a " style="left:564.57px;top:619.5px;width:916.82px;height:17.0px;background:#e9effd"></div>
<div class="t" style="right:1473.49px;top:622px;letter-spacing:-0.123px;">12</div>
<div class="t" style="left:56.08px;top:622px;letter-spacing:-0.661px;">Fach</div>
<div class="t" style="left:285.12px;top:622px;letter-spacing:-0.45px;">Französisch</div>
<div class="t" style="left:565.38px;top:622px;letter-spacing:-0.153px;">Pflichtunt</div>
<div class="t" style="right:791.08px;top:622px;letter-spacing:0px;">1</div>
<div class="t" style="right:748.48px;top:622px;letter-spacing:0px;">1</div>
<div class="t" style="right:705.88px;top:622px;letter-spacing:0px;">1</div>
<div class="t" style="right:663.56px;top:622px;letter-spacing:0px;">1</div>
<div class="t" style="left:865.6px;top:622px;letter-spacing:-0.45px;">Französisch</div>
<div class="t" style="left:1294.15px;top:622px;letter-spacing:0.079px;">1-6</div>
<div class="t" style="left:1362.36px;top:622px;letter-spacing:0.079px;">1-6</div>
<div class="t" style="left:1429.5px;top:622px;letter-spacing:-0.225px;">Wort</div>
<svg style="left:1482.88px;top:620.11px" width="17.93" height="16.06" viewBox="0 0 17.93 16.06"><rect x="0.8" y="0.8" width="16.33" height="14.16" rx="2.6" fill="url(#gx)" stroke="#42639a" stroke-width="1.6"/><path d="M1.6 14.56 H16.33" stroke="#3b5a8f" stroke-width="1.2"/><path d="M4.21 2.73 L14.34 12.85 M14.34 2.73 L4.21 12.85" stroke="#f2343f" stroke-width="3.1" fill="none"/></svg>
<div class="a " style="left:17.93px;top:636.5px;width:546.64px;height:17.0px;background:#e8e8f2"></div>
<div class="a " style="left:564.57px;top:636.5px;width:916.82px;height:17.0px;background:#ffffff"></div>
<div class="t" style="right:1473.49px;top:638px;letter-spacing:-0.123px;">13</div>
<div class="t" style="left:56.08px;top:638px;letter-spacing:-0.661px;">Fach</div>
<div class="t" style="left:285.12px;top:638px;letter-spacing:-0.538px;">Spanisch</div>
<div class="t" style="left:565.38px;top:638px;letter-spacing:-0.153px;">Pflichtunt</div>
<div class="t" style="right:791.08px;top:638px;letter-spacing:0px;">1</div>
<div class="t" style="right:748.48px;top:638px;letter-spacing:0px;">1</div>
<div class="t" style="right:705.88px;top:638px;letter-spacing:0px;">1</div>
<div class="t" style="right:663.56px;top:638px;letter-spacing:0px;">1</div>
<div class="t" style="left:865.6px;top:638px;letter-spacing:-0.538px;">Spanisch</div>
<div class="t" style="left:1294.15px;top:638px;letter-spacing:0.079px;">1-6</div>
<div class="t" style="left:1362.36px;top:638px;letter-spacing:0.079px;">1-6</div>
<div class="t" style="left:1429.5px;top:638px;letter-spacing:-0.225px;">Wort</div>
<svg style="left:1482.88px;top:637.11px" width="17.93" height="16.06" viewBox="0 0 17.93 16.06"><rect x="0.8" y="0.8" width="16.33" height="14.16" rx="2.6" fill="url(#gx)" stroke="#42639a" stroke-width="1.6"/><path d="M1.6 14.56 H16.33" stroke="#3b5a8f" stroke-width="1.2"/><path d="M4.21 2.73 L14.34 12.85 M14.34 2.73 L4.21 12.85" stroke="#f2343f" stroke-width="3.1" fill="none"/></svg>
<div class="a " style="left:17.93px;top:653.5px;width:546.64px;height:17.0px;background:#c9d7f6"></div>
<div class="a " style="left:564.57px;top:653.5px;width:916.82px;height:17.0px;background:#e9effd"></div>
<div class="t" style="right:1473.49px;top:656px;letter-spacing:-0.123px;">14</div>
<div class="t" style="left:56.08px;top:656px;letter-spacing:-0.661px;">Fach</div>
<div class="t" style="left:285.12px;top:656px;letter-spacing:-0.196px;">Betriebswirtschaft</div>
<div class="t" style="left:565.38px;top:656px;letter-spacing:-0.283px;">Berufsfachlich</div>
<div class="t" style="right:791.08px;top:656px;letter-spacing:0px;">1</div>
<div class="t" style="right:748.48px;top:656px;letter-spacing:0px;">1</div>
<div class="t" style="right:705.88px;top:656px;letter-spacing:0px;">1</div>
<div class="t" style="right:663.56px;top:656px;letter-spacing:0px;">1</div>
<div class="t" style="left:865.6px;top:656px;letter-spacing:-0.196px;">Betriebswirtschaft</div>
<div class="t" style="left:1294.15px;top:656px;letter-spacing:0.079px;">1-6</div>
<div class="t" style="left:1362.36px;top:656px;letter-spacing:0.079px;">1-6</div>
<div class="t" style="left:1429.5px;top:656px;letter-spacing:-0.225px;">Wort</div>
<svg style="left:1482.88px;top:654.11px" width="17.93" height="16.06" viewBox="0 0 17.93 16.06"><rect x="0.8" y="0.8" width="16.33" height="14.16" rx="2.6" fill="url(#gx)" stroke="#42639a" stroke-width="1.6"/><path d="M1.6 14.56 H16.33" stroke="#3b5a8f" stroke-width="1.2"/><path d="M4.21 2.73 L14.34 12.85 M14.34 2.73 L4.21 12.85" stroke="#f2343f" stroke-width="3.1" fill="none"/></svg>
<div class="a " style="left:17.93px;top:670.5px;width:546.64px;height:17.0px;background:#e8e8f2"></div>
<div class="a " style="left:564.57px;top:670.5px;width:916.82px;height:17.0px;background:#ffffff"></div>
<div class="t" style="right:1473.49px;top:672px;letter-spacing:-0.123px;">15</div>
<div class="t" style="left:56.08px;top:672px;letter-spacing:-0.661px;">Fach</div>
<div class="t" style="left:285.12px;top:672px;letter-spacing:-0.284px;">Steuerung/Kontrolle</div>
<div class="t" style="left:565.38px;top:672px;letter-spacing:-0.283px;">Berufsfachlich</div>
<div class="t" style="right:791.08px;top:672px;letter-spacing:0px;">1</div>
<div class="t" style="right:748.48px;top:672px;letter-spacing:0px;">1</div>
<div class="t" style="right:705.88px;top:672px;letter-spacing:0px;">1</div>
<div class="t" style="right:663.56px;top:672px;letter-spacing:0px;">1</div>
<div class="t" style="left:865.6px;top:672px;letter-spacing:-0.303px;">Steuerung und Kontrolle</div>
<div class="t" style="left:1294.15px;top:672px;letter-spacing:0.079px;">1-6</div>
<div class="t" style="left:1362.36px;top:672px;letter-spacing:0.079px;">1-6</div>
<div class="t" style="left:1429.5px;top:672px;letter-spacing:-0.225px;">Wort</div>
<svg style="left:1482.88px;top:671.11px" width="17.93" height="16.06" viewBox="0 0 17.93 16.06"><rect x="0.8" y="0.8" width="16.33" height="14.16" rx="2.6" fill="url(#gx)" stroke="#42639a" stroke-width="1.6"/><path d="M1.6 14.56 H16.33" stroke="#3b5a8f" stroke-width="1.2"/><path d="M4.21 2.73 L14.34 12.85 M14.34 2.73 L4.21 12.85" stroke="#f2343f" stroke-width="3.1" fill="none"/></svg>
<div class="a " style="left:17.93px;top:687.5px;width:546.64px;height:17.0px;background:#c9d7f6"></div>
<div class="a " style="left:564.57px;top:687.5px;width:916.82px;height:17.0px;background:#e9effd"></div>
<div class="t" style="right:1473.49px;top:690px;letter-spacing:-0.123px;">16</div>
<div class="t" style="left:56.08px;top:690px;letter-spacing:-0.661px;">Fach</div>
<div class="t" style="left:285.12px;top:690px;letter-spacing:-0.3px;">Gesamtwirtschaft</div>
<div class="t" style="left:565.38px;top:690px;letter-spacing:-0.283px;">Berufsfachlich</div>
<div class="t" style="right:791.08px;top:690px;letter-spacing:0px;">1</div>
<div class="t" style="right:748.48px;top:690px;letter-spacing:0px;">1</div>
<div class="t" style="right:705.88px;top:690px;letter-spacing:0px;">1</div>
<div class="t" style="right:663.56px;top:690px;letter-spacing:0px;">1</div>
<div class="t" style="left:865.6px;top:690px;letter-spacing:-0.3px;">Gesamtwirtschaft</div>
<div class="t" style="left:1294.15px;top:690px;letter-spacing:0.079px;">1-6</div>
<div class="t" style="left:1362.36px;top:690px;letter-spacing:0.079px;">1-6</div>
<div class="t" style="left:1429.5px;top:690px;letter-spacing:-0.225px;">Wort</div>
<svg style="left:1482.88px;top:688.11px" width="17.93" height="16.06" viewBox="0 0 17.93 16.06"><rect x="0.8" y="0.8" width="16.33" height="14.16" rx="2.6" fill="url(#gx)" stroke="#42639a" stroke-width="1.6"/><path d="M1.6 14.56 H16.33" stroke="#3b5a8f" stroke-width="1.2"/><path d="M4.21 2.73 L14.34 12.85 M14.34 2.73 L4.21 12.85" stroke="#f2343f" stroke-width="3.1" fill="none"/></svg>
<div class="a " style="left:17.93px;top:704.5px;width:546.64px;height:17.0px;background:#e8e8f2"></div>
<div class="a " style="left:564.57px;top:704.5px;width:916.82px;height:17.0px;background:#ffffff"></div>
<div class="t" style="right:1473.49px;top:707px;letter-spacing:-0.123px;">17</div>
<div class="t" style="left:56.08px;top:707px;letter-spacing:-0.661px;">Fach</div>
<div class="t" style="left:285.12px;top:707px;letter-spacing:-0.56px;">Büromanagement</div>
<div class="t" style="left:565.38px;top:707px;letter-spacing:-0.283px;">Berufsfachlich</div>
<div class="t" style="right:791.08px;top:707px;letter-spacing:0px;">1</div>
<div class="t" style="right:748.48px;top:707px;letter-spacing:0px;">1</div>
<div class="t" style="right:705.88px;top:707px;letter-spacing:0px;">1</div>
<div class="t" style="right:663.56px;top:707px;letter-spacing:0px;">1</div>
<div class="t" style="left:865.6px;top:707px;letter-spacing:-0.56px;">Büromanagement</div>
<div class="t" style="left:1294.15px;top:707px;letter-spacing:0.079px;">1-6</div>
<div class="t" style="left:1362.36px;top:707px;letter-spacing:0.079px;">1-6</div>
<div class="t" style="left:1429.5px;top:707px;letter-spacing:-0.225px;">Wort</div>
<svg style="left:1482.88px;top:705.11px" width="17.93" height="16.06" viewBox="0 0 17.93 16.06"><rect x="0.8" y="0.8" width="16.33" height="14.16" rx="2.6" fill="url(#gx)" stroke="#42639a" stroke-width="1.6"/><path d="M1.6 14.56 H16.33" stroke="#3b5a8f" stroke-width="1.2"/><path d="M4.21 2.73 L14.34 12.85 M14.34 2.73 L4.21 12.85" stroke="#f2343f" stroke-width="3.1" fill="none"/></svg>
<div class="a " style="left:17.93px;top:721.5px;width:546.64px;height:17.0px;background:#c9d7f6"></div>
<div class="a " style="left:564.57px;top:721.5px;width:916.82px;height:17.0px;background:#e9effd"></div>
<div class="t" style="right:1473.49px;top:723px;letter-spacing:-0.123px;">18</div>
<div class="t" style="left:56.08px;top:723px;letter-spacing:-0.661px;">Fach</div>
<div class="t" style="left:285.12px;top:723px;letter-spacing:-0.412px;">Projektkompetenz</div>
<div class="t" style="left:565.38px;top:723px;letter-spacing:-0.283px;">Berufsfachlich</div>
<div class="t" style="right:791.08px;top:723px;letter-spacing:0px;">1</div>
<div class="t" style="right:748.48px;top:723px;letter-spacing:0px;">1</div>
<div class="t" style="right:705.88px;top:723px;letter-spacing:0px;">1</div>
<div class="t" style="right:663.56px;top:723px;letter-spacing:0px;">1</div>
<div class="t" style="left:865.6px;top:723px;letter-spacing:-0.412px;">Projektkompetenz</div>
<div class="t" style="left:1294.15px;top:723px;letter-spacing:0.079px;">1-6</div>
<div class="t" style="left:1362.36px;top:723px;letter-spacing:0.079px;">1-6</div>
<div class="t" style="left:1429.5px;top:723px;letter-spacing:-0.225px;">Wort</div>
<svg style="left:1482.88px;top:722.11px" width="17.93" height="16.06" viewBox="0 0 17.93 16.06"><rect x="0.8" y="0.8" width="16.33" height="14.16" rx="2.6" fill="url(#gx)" stroke="#42639a" stroke-width="1.6"/><path d="M1.6 14.56 H16.33" stroke="#3b5a8f" stroke-width="1.2"/><path d="M4.21 2.73 L14.34 12.85 M14.34 2.73 L4.21 12.85" stroke="#f2343f" stroke-width="3.1" fill="none"/></svg>
<div class="a " style="left:17.93px;top:738.5px;width:546.64px;height:17.0px;background:#e8e8f2"></div>
<div class="a " style="left:564.57px;top:738.5px;width:916.82px;height:17.0px;background:#ffffff"></div>
<div class="t" style="right:1473.49px;top:741px;letter-spacing:-0.123px;">19</div>
<div class="t" style="left:56.08px;top:741px;letter-spacing:-0.661px;">Fach</div>
<div class="t" style="left:285.12px;top:741px;letter-spacing:-0.163px;">Wirtschaft</div>
<div class="t" style="left:565.38px;top:741px;letter-spacing:-0.435px;">Wahlunt</div>
<div class="t" style="right:791.08px;top:741px;letter-spacing:0px;">1</div>
<div class="t" style="right:748.48px;top:741px;letter-spacing:0px;">1</div>
<div class="t" style="right:705.88px;top:741px;letter-spacing:0px;">1</div>
<div class="t" style="right:663.56px;top:741px;letter-spacing:0px;">1</div>
<div class="t" style="left:865.6px;top:741px;letter-spacing:-0.163px;">Wirtschaft</div>
<div class="t" style="left:1294.15px;top:741px;letter-spacing:0.079px;">1-6</div>
<div class="t" style="left:1362.36px;top:741px;letter-spacing:0.079px;">1-6</div>
<div class="t" style="left:1429.5px;top:741px;letter-spacing:-0.225px;">Wort</div>
<svg style="left:1482.88px;top:739.11px" width="17.93" height="16.06" viewBox="0 0 17.93 16.06"><rect x="0.8" y="0.8" width="16.33" height="14.16" rx="2.6" fill="url(#gx)" stroke="#42639a" stroke-width="1.6"/><path d="M1.6 14.56 H16.33" stroke="#3b5a8f" stroke-width="1.2"/><path d="M4.21 2.73 L14.34 12.85 M14.34 2.73 L4.21 12.85" stroke="#f2343f" stroke-width="3.1" fill="none"/></svg>
<div class="a " style="left:17.93px;top:755.5px;width:546.64px;height:17.0px;background:#c9d7f6"></div>
<div class="a " style="left:564.57px;top:755.5px;width:916.82px;height:17.0px;background:#e9effd"></div>
<div class="t" style="right:1473.49px;top:757px;letter-spacing:-0.123px;">20</div>
<div class="t" style="left:56.08px;top:757px;letter-spacing:-0.661px;">Fach</div>
<div class="t" style="left:285.12px;top:757px;letter-spacing:-0.349px;">3. Fremdsprache</div>
<div class="t" style="left:565.38px;top:757px;letter-spacing:-0.435px;">Wahlunt</div>
<div class="t" style="right:791.08px;top:757px;letter-spacing:0px;">1</div>
<div class="t" style="right:748.48px;top:757px;letter-spacing:0px;">1</div>
<div class="t" style="right:705.88px;top:757px;letter-spacing:0px;">1</div>
<div class="t" style="right:663.56px;top:757px;letter-spacing:0px;">1</div>
<div class="t" style="left:865.6px;top:757px;letter-spacing:-0.349px;">3. Fremdsprache</div>
<div class="t" style="left:1294.15px;top:757px;letter-spacing:0.079px;">1-6</div>
<div class="t" style="left:1362.36px;top:757px;letter-spacing:0.079px;">1-6</div>
<div class="t" style="left:1429.5px;top:757px;letter-spacing:-0.225px;">Wort</div>
<svg style="left:1482.88px;top:756.11px" width="17.93" height="16.06" viewBox="0 0 17.93 16.06"><rect x="0.8" y="0.8" width="16.33" height="14.16" rx="2.6" fill="url(#gx)" stroke="#42639a" stroke-width="1.6"/><path d="M1.6 14.56 H16.33" stroke="#3b5a8f" stroke-width="1.2"/><path d="M4.21 2.73 L14.34 12.85 M14.34 2.73 L4.21 12.85" stroke="#f2343f" stroke-width="3.1" fill="none"/></svg>
<div class="a " style="left:17.93px;top:772.5px;width:36.8px;height:17.0px;background:#e8e8f2"></div>
<div class="a " style="left:54.73px;top:772.5px;width:509.84px;height:17.0px;background:#ffffff"></div>
<div class="a " style="left:564.57px;top:772.5px;width:130.09px;height:17.0px;background:#e8e8f2"></div>
<div class="a " style="left:694.66px;top:772.5px;width:786.73px;height:17.0px;background:#ffffff"></div>
<div class="t" style="right:1473.49px;top:775px;letter-spacing:-0.123px;">21</div>
<div class="t" style="left:56.08px;top:775px;letter-spacing:-0.322px;">Verhalten</div>
<div class="t" style="left:285.12px;top:775px;letter-spacing:-0.322px;">Verhalten</div>
<div class="t" style="right:791.08px;top:775px;letter-spacing:0px;">0</div>
<div class="t" style="right:748.48px;top:775px;letter-spacing:0px;">0</div>
<div class="t" style="right:705.88px;top:775px;letter-spacing:0px;">0</div>
<div class="t" style="right:663.56px;top:775px;letter-spacing:0px;">0</div>
<div class="t" style="left:865.6px;top:775px;letter-spacing:-0.322px;">Verhalten</div>
<div class="t" style="left:1294.15px;top:775px;letter-spacing:0.079px;">1-4</div>
<div class="t" style="left:1362.36px;top:775px;letter-spacing:0.079px;">1-4</div>
<div class="t" style="left:1429.5px;top:775px;letter-spacing:-0.225px;">Wort</div>
<svg style="left:1482.88px;top:773.11px" width="17.93" height="16.06" viewBox="0 0 17.93 16.06"><rect x="0.8" y="0.8" width="16.33" height="14.16" rx="2.6" fill="url(#gx)" stroke="#42639a" stroke-width="1.6"/><path d="M1.6 14.56 H16.33" stroke="#3b5a8f" stroke-width="1.2"/><path d="M4.21 2.73 L14.34 12.85 M14.34 2.73 L4.21 12.85" stroke="#f2343f" stroke-width="3.1" fill="none"/></svg>
<div class="a " style="left:17.93px;top:789.5px;width:36.8px;height:17.0px;background:#c9d7f6"></div>
<div class="a " style="left:54.73px;top:789.5px;width:509.84px;height:17.0px;background:#e9effd"></div>
<div class="a " style="left:564.57px;top:789.5px;width:130.09px;height:17.0px;background:#c9d7f6"></div>
<div class="a " style="left:694.66px;top:789.5px;width:786.73px;height:17.0px;background:#e9effd"></div>
<div class="t" style="right:1473.49px;top:792px;letter-spacing:-0.123px;">22</div>
<div class="t" style="left:56.08px;top:792px;letter-spacing:-0.117px;">Mitarbeit</div>
<div class="t" style="left:285.12px;top:792px;letter-spacing:-0.117px;">Mitarbeit</div>
<div class="t" style="right:791.08px;top:792px;letter-spacing:0px;">0</div>
<div class="t" style="right:748.48px;top:792px;letter-spacing:0px;">0</div>
<div class="t" style="right:705.88px;top:792px;letter-spacing:0px;">0</div>
<div class="t" style="right:663.56px;top:792px;letter-spacing:0px;">0</div>
<div class="t" style="left:865.6px;top:792px;letter-spacing:-0.117px;">Mitarbeit</div>
<div class="t" style="left:1294.15px;top:792px;letter-spacing:0.079px;">1-4</div>
<div class="t" style="left:1362.36px;top:792px;letter-spacing:0.079px;">1-4</div>
<div class="t" style="left:1429.5px;top:792px;letter-spacing:-0.225px;">Wort</div>
<svg style="left:1482.88px;top:790.11px" width="17.93" height="16.06" viewBox="0 0 17.93 16.06"><rect x="0.8" y="0.8" width="16.33" height="14.16" rx="2.6" fill="url(#gx)" stroke="#42639a" stroke-width="1.6"/><path d="M1.6 14.56 H16.33" stroke="#3b5a8f" stroke-width="1.2"/><path d="M4.21 2.73 L14.34 12.85 M14.34 2.73 L4.21 12.85" stroke="#f2343f" stroke-width="3.1" fill="none"/></svg>
<div class="a " style="left:17.93px;top:806.5px;width:36.8px;height:17.0px;background:#e8e8f2"></div>
<div class="a " style="left:54.73px;top:806.5px;width:509.84px;height:17.0px;background:#ffffff"></div>
<div class="a " style="left:564.57px;top:806.5px;width:300.49px;height:17.0px;background:#e8e8f2"></div>
<div class="a " style="left:865.06px;top:806.5px;width:427.07px;height:17.0px;background:#ffffff"></div>
<div class="a " style="left:1292.13px;top:806.5px;width:189.27px;height:17.0px;background:#e8e8f2"></div>
<div class="t" style="right:1473.49px;top:808px;letter-spacing:-0.123px;">23</div>
<div class="t" style="left:56.08px;top:808px;letter-spacing:-0.593px;">Bemerkungen</div>
<div class="t" style="left:285.12px;top:808px;letter-spacing:-0.593px;">Bemerkungen</div>
<div class="t" style="left:865.6px;top:808px;letter-spacing:-0.593px;">Bemerkungen</div>
<svg style="left:1482.88px;top:807.11px" width="17.93" height="16.06" viewBox="0 0 17.93 16.06"><rect x="0.8" y="0.8" width="16.33" height="14.16" rx="2.6" fill="url(#gx)" stroke="#42639a" stroke-width="1.6"/><path d="M1.6 14.56 H16.33" stroke="#3b5a8f" stroke-width="1.2"/><path d="M4.21 2.73 L14.34 12.85 M14.34 2.73 L4.21 12.85" stroke="#f2343f" stroke-width="3.1" fill="none"/></svg>
<div class="a " style="left:17.93px;top:823.5px;width:36.8px;height:17.0px;background:#c9d7f6"></div>
<div class="a " style="left:54.73px;top:823.5px;width:509.84px;height:17.0px;background:#e9effd"></div>
<div class="a " style="left:564.57px;top:823.5px;width:300.49px;height:17.0px;background:#c9d7f6"></div>
<div class="a " style="left:865.06px;top:823.5px;width:427.07px;height:17.0px;background:#e9effd"></div>
<div class="a " style="left:1292.13px;top:823.5px;width:189.27px;height:17.0px;background:#c9d7f6"></div>
<div class="t" style="right:1473.49px;top:826px;letter-spacing:-0.123px;">24</div>
<div class="t" style="left:56.08px;top:826px;letter-spacing:-0.464px;">teilgenommen</div>
<div class="t" style="left:285.12px;top:826px;letter-spacing:-0.464px;">teilgenommen</div>
<div class="t" style="left:865.6px;top:826px;letter-spacing:-0.464px;">teilgenommen</div>
<svg style="left:1482.88px;top:824.11px" width="17.93" height="16.06" viewBox="0 0 17.93 16.06"><rect x="0.8" y="0.8" width="16.33" height="14.16" rx="2.6" fill="url(#gx)" stroke="#42639a" stroke-width="1.6"/><path d="M1.6 14.56 H16.33" stroke="#3b5a8f" stroke-width="1.2"/><path d="M4.21 2.73 L14.34 12.85 M14.34 2.73 L4.21 12.85" stroke="#f2343f" stroke-width="3.1" fill="none"/></svg>
<div class="a " style="left:17.93px;top:840.5px;width:36.8px;height:17.0px;background:#e8e8f2"></div>
<div class="a " style="left:54.73px;top:840.5px;width:509.84px;height:17.0px;background:#ffffff"></div>
<div class="a " style="left:564.57px;top:840.5px;width:300.49px;height:17.0px;background:#e8e8f2"></div>
<div class="a " style="left:865.06px;top:840.5px;width:427.07px;height:17.0px;background:#ffffff"></div>
<div class="a " style="left:1292.13px;top:840.5px;width:189.27px;height:17.0px;background:#e8e8f2"></div>
<div class="t" style="right:1473.49px;top:842px;letter-spacing:-0.123px;">25</div>
<div class="t" style="left:56.08px;top:842px;letter-spacing:-0.284px;">versetztText</div>
<div class="t" style="left:285.12px;top:842px;letter-spacing:-0.284px;">versetztText</div>
<div class="t" style="left:865.6px;top:842px;letter-spacing:-0.284px;">versetztText</div>
<svg style="left:1482.88px;top:841.11px" width="17.93" height="16.06" viewBox="0 0 17.93 16.06"><rect x="0.8" y="0.8" width="16.33" height="14.16" rx="2.6" fill="url(#gx)" stroke="#42639a" stroke-width="1.6"/><path d="M1.6 14.56 H16.33" stroke="#3b5a8f" stroke-width="1.2"/><path d="M4.21 2.73 L14.34 12.85 M14.34 2.73 L4.21 12.85" stroke="#f2343f" stroke-width="3.1" fill="none"/></svg>
<div class="a " style="left:17.93px;top:857.5px;width:36.8px;height:17.0px;background:#c9d7f6"></div>
<div class="a " style="left:54.73px;top:857.5px;width:509.84px;height:17.0px;background:#e9effd"></div>
<div class="a " style="left:564.57px;top:857.5px;width:300.49px;height:17.0px;background:#c9d7f6"></div>
<div class="a " style="left:865.06px;top:857.5px;width:427.07px;height:17.0px;background:#e9effd"></div>
<div class="a " style="left:1292.13px;top:857.5px;width:189.27px;height:17.0px;background:#c9d7f6"></div>
<div class="t" style="right:1473.49px;top:860px;letter-spacing:-0.123px;">26</div>
<div class="t" style="left:56.08px;top:860px;letter-spacing:-0.228px;">versetzt</div>
<div class="t" style="left:285.12px;top:860px;letter-spacing:-0.228px;">versetzt</div>
<div class="t" style="left:865.6px;top:860px;letter-spacing:-0.228px;">versetzt</div>
<svg style="left:1482.88px;top:858.11px" width="17.93" height="16.06" viewBox="0 0 17.93 16.06"><rect x="0.8" y="0.8" width="16.33" height="14.16" rx="2.6" fill="url(#gx)" stroke="#42639a" stroke-width="1.6"/><path d="M1.6 14.56 H16.33" stroke="#3b5a8f" stroke-width="1.2"/><path d="M4.21 2.73 L14.34 12.85 M14.34 2.73 L4.21 12.85" stroke="#f2343f" stroke-width="3.1" fill="none"/></svg>
<div class="a " style="left:17.93px;top:874.5px;width:36.8px;height:17.0px;background:#e8e8f2"></div>
<div class="a " style="left:54.73px;top:874.5px;width:509.84px;height:17.0px;background:#ffffff"></div>
<div class="a " style="left:564.57px;top:874.5px;width:300.49px;height:17.0px;background:#e8e8f2"></div>
<div class="a " style="left:865.06px;top:874.5px;width:427.07px;height:17.0px;background:#ffffff"></div>
<div class="a " style="left:1292.13px;top:874.5px;width:189.27px;height:17.0px;background:#e8e8f2"></div>
<div class="t" style="right:1473.49px;top:877px;letter-spacing:-0.123px;">27</div>
<div class="t" style="left:56.08px;top:877px;letter-spacing:-0.683px;">Abgang</div>
<div class="t" style="left:285.12px;top:877px;letter-spacing:-0.683px;">Abgang</div>
<div class="t" style="left:865.6px;top:877px;letter-spacing:-0.683px;">Abgang</div>
<svg style="left:1482.88px;top:875.11px" width="17.93" height="16.06" viewBox="0 0 17.93 16.06"><rect x="0.8" y="0.8" width="16.33" height="14.16" rx="2.6" fill="url(#gx)" stroke="#42639a" stroke-width="1.6"/><path d="M1.6 14.56 H16.33" stroke="#3b5a8f" stroke-width="1.2"/><path d="M4.21 2.73 L14.34 12.85 M14.34 2.73 L4.21 12.85" stroke="#f2343f" stroke-width="3.1" fill="none"/></svg>
<div class="a " style="left:17.93px;top:891.5px;width:36.8px;height:17.0px;background:#c9d7f6"></div>
<div class="a " style="left:54.73px;top:891.5px;width:509.84px;height:17.0px;background:#e9effd"></div>
<div class="a " style="left:564.57px;top:891.5px;width:300.49px;height:17.0px;background:#c9d7f6"></div>
<div class="a " style="left:865.06px;top:891.5px;width:427.07px;height:17.0px;background:#e9effd"></div>
<div class="a " style="left:1292.13px;top:891.5px;width:189.27px;height:17.0px;background:#c9d7f6"></div>
<div class="t" style="right:1473.49px;top:893px;letter-spacing:-0.123px;">28</div>
<div class="t" style="left:56.08px;top:893px;letter-spacing:-0.184px;">Lob / Preis</div>
<div class="t" style="left:285.12px;top:893px;letter-spacing:-0.184px;">Lob / Preis</div>
<div class="t" style="left:865.6px;top:893px;letter-spacing:-0.184px;">Lob / Preis</div>
<svg style="left:1482.88px;top:892.11px" width="17.93" height="16.06" viewBox="0 0 17.93 16.06"><rect x="0.8" y="0.8" width="16.33" height="14.16" rx="2.6" fill="url(#gx)" stroke="#42639a" stroke-width="1.6"/><path d="M1.6 14.56 H16.33" stroke="#3b5a8f" stroke-width="1.2"/><path d="M4.21 2.73 L14.34 12.85 M14.34 2.73 L4.21 12.85" stroke="#f2343f" stroke-width="3.1" fill="none"/></svg>
<div class="a " style="left:17.93px;top:908.5px;width:36.8px;height:17.0px;background:#e8e8f2"></div>
<div class="a " style="left:54.73px;top:908.5px;width:509.84px;height:17.0px;background:#ffffff"></div>
<div class="a " style="left:564.57px;top:908.5px;width:300.49px;height:17.0px;background:#e8e8f2"></div>
<div class="a " style="left:865.06px;top:908.5px;width:427.07px;height:17.0px;background:#ffffff"></div>
<div class="a " style="left:1292.13px;top:908.5px;width:189.27px;height:17.0px;background:#e8e8f2"></div>
<div class="t" style="right:1473.49px;top:911px;letter-spacing:-0.123px;">29</div>
<div class="t" style="left:56.08px;top:911px;letter-spacing:-0.243px;">Durchschnitt 1</div>
<div class="t" style="left:285.12px;top:911px;letter-spacing:-0.243px;">Durchschnitt 1</div>
<div class="t" style="left:865.6px;top:911px;letter-spacing:-0.243px;">Durchschnitt 1</div>
<svg style="left:1482.88px;top:909.11px" width="17.93" height="16.06" viewBox="0 0 17.93 16.06"><rect x="0.8" y="0.8" width="16.33" height="14.16" rx="2.6" fill="url(#gx)" stroke="#42639a" stroke-width="1.6"/><path d="M1.6 14.56 H16.33" stroke="#3b5a8f" stroke-width="1.2"/><path d="M4.21 2.73 L14.34 12.85 M14.34 2.73 L4.21 12.85" stroke="#f2343f" stroke-width="3.1" fill="none"/></svg>
<div class="a " style="left:17.93px;top:925.5px;width:1463.47px;height:17.0px;background:#c9d7f6"></div>
<div class="a" style="left:1483.15px;top:926.17px;width:17.52px;height:15.92px;border:1px solid #dcdce2;border-radius:2px;background:#fdfdfd"><svg style="left:1.8px;top:0.8px" width="11.92" height="12.32" viewBox="0 0 10 10" preserveAspectRatio="none"><path d="M1.3 1.3 L8.7 8.7 M8.7 1.3 L1.3 8.7" stroke="#8c8c8c" stroke-width="2.4" fill="none"/></svg></div>
<div class="a" style="left:18px;top:449px;width:1463px;height:1px;background:#aeaeb9"></div>
<div class="a" style="left:18px;top:466px;width:1463px;height:1px;background:#aeaeb9"></div>
<div class="a" style="left:18px;top:483px;width:1463px;height:1px;background:#aeaeb9"></div>
<div class="a" style="left:18px;top:500px;width:1463px;height:1px;background:#aeaeb9"></div>
<div class="a" style="left:18px;top:517px;width:1463px;height:1px;background:#aeaeb9"></div>
<div class="a" style="left:18px;top:534px;width:1463px;height:1px;background:#aeaeb9"></div>
<div class="a" style="left:18px;top:551px;width:1463px;height:1px;background:#aeaeb9"></div>
<div class="a" style="left:18px;top:568px;width:1463px;height:1px;background:#aeaeb9"></div>
<div class="a" style="left:18px;top:585px;width:1463px;height:1px;background:#aeaeb9"></div>
<div class="a" style="left:18px;top:602px;width:1463px;height:1px;background:#aeaeb9"></div>
<div class="a" style="left:18px;top:619px;width:1463px;height:1px;background:#aeaeb9"></div>
<div class="a" style="left:18px;top:636px;width:1463px;height:1px;background:#aeaeb9"></div>
<div class="a" style="left:18px;top:653px;width:1463px;height:1px;background:#aeaeb9"></div>
<div class="a" style="left:18px;top:670px;width:1463px;height:1px;background:#aeaeb9"></div>
<div class="a" style="left:18px;top:687px;width:1463px;height:1px;background:#aeaeb9"></div>
<div class="a" style="left:18px;top:704px;width:1463px;height:1px;background:#aeaeb9"></div>
<div class="a" style="left:18px;top:721px;width:1463px;height:1px;background:#aeaeb9"></div>
<div class="a" style="left:18px;top:738px;width:1463px;height:1px;background:#aeaeb9"></div>
<div class="a" style="left:18px;top:755px;width:1463px;height:1px;background:#aeaeb9"></div>
<div class="a" style="left:18px;top:772px;width:1463px;height:1px;background:#aeaeb9"></div>
<div class="a" style="left:18px;top:789px;width:1463px;height:1px;background:#aeaeb9"></div>
<div class="a" style="left:18px;top:806px;width:1463px;height:1px;background:#aeaeb9"></div>
<div class="a" style="left:18px;top:823px;width:1463px;height:1px;background:#aeaeb9"></div>
<div class="a" style="left:18px;top:840px;width:1463px;height:1px;background:#aeaeb9"></div>
<div class="a" style="left:18px;top:857px;width:1463px;height:1px;background:#aeaeb9"></div>
<div class="a" style="left:18px;top:874px;width:1463px;height:1px;background:#aeaeb9"></div>
<div class="a" style="left:18px;top:891px;width:1463px;height:1px;background:#aeaeb9"></div>
<div class="a" style="left:18px;top:908px;width:1463px;height:1px;background:#aeaeb9"></div>
<div class="a" style="left:18px;top:925px;width:1463px;height:1px;background:#aeaeb9"></div>
<div class="a" style="left:18px;top:942px;width:1463px;height:1px;background:#aeaeb9"></div>
<div class="a" style="left:18px;top:432px;width:1483px;height:1px;background:#aeaeb9"></div>
<div class="a" style="left:55px;top:433px;width:1px;height:509px;background:rgba(255,255,255,.5)"></div>
<div class="a" style="left:54px;top:432px;width:1px;height:511px;background:#bcbcc6"></div>
<div class="a" style="left:285px;top:433px;width:1px;height:509px;background:rgba(255,255,255,.5)"></div>
<div class="a" style="left:284px;top:432px;width:1px;height:511px;background:#bcbcc6"></div>
<div class="a" style="left:565px;top:433px;width:1px;height:509px;background:rgba(255,255,255,.5)"></div>
<div class="a" style="left:564px;top:432px;width:1px;height:511px;background:#bcbcc6"></div>
<div class="a" style="left:695px;top:433px;width:1px;height:509px;background:rgba(255,255,255,.5)"></div>
<div class="a" style="left:694px;top:432px;width:1px;height:511px;background:#bcbcc6"></div>
<div class="a" style="left:738px;top:433px;width:1px;height:509px;background:rgba(255,255,255,.5)"></div>
<div class="a" style="left:737px;top:432px;width:1px;height:511px;background:#bcbcc6"></div>
<div class="a" style="left:781px;top:433px;width:1px;height:509px;background:rgba(255,255,255,.5)"></div>
<div class="a" style="left:780px;top:432px;width:1px;height:511px;background:#bcbcc6"></div>
<div class="a" style="left:823px;top:433px;width:1px;height:509px;background:rgba(255,255,255,.5)"></div>
<div class="a" style="left:822px;top:432px;width:1px;height:511px;background:#bcbcc6"></div>
<div class="a" style="left:866px;top:433px;width:1px;height:509px;background:rgba(255,255,255,.5)"></div>
<div class="a" style="left:865px;top:432px;width:1px;height:511px;background:#bcbcc6"></div>
<div class="a" style="left:1293px;top:433px;width:1px;height:509px;background:rgba(255,255,255,.5)"></div>
<div class="a" style="left:1292px;top:432px;width:1px;height:511px;background:#bcbcc6"></div>
<div class="a" style="left:1361px;top:433px;width:1px;height:509px;background:rgba(255,255,255,.5)"></div>
<div class="a" style="left:1360px;top:432px;width:1px;height:511px;background:#bcbcc6"></div>
<div class="a" style="left:1429px;top:433px;width:1px;height:509px;background:rgba(255,255,255,.5)"></div>
<div class="a" style="left:1428px;top:432px;width:1px;height:511px;background:#bcbcc6"></div>
<div class="a" style="left:1482px;top:433px;width:1px;height:509px;background:rgba(255,255,255,.5)"></div>
<div class="a" style="left:1481px;top:432px;width:1px;height:511px;background:#bcbcc6"></div>
<div class="a " style="left:1502.56px;top:433.54px;width:14.83px;height:530.33px;background:#fafaff"></div>
<div class="a " style="left:1503.1px;top:434.08px;width:13.75px;height:14.29px;background:linear-gradient(#f6f6fa,#e6e6ec);border-radius:1.5px"></div>
<svg style="left:1505.93px;top:438.53px" width="8.09" height="5.66" viewBox="0 0 8 5.6"><path d="M0.8 4.4 L4 1.2 L7.2 4.4" stroke="#c3c3c8" stroke-width="1.5" fill="none"/></svg>
<div class="a " style="left:1503.1px;top:949.04px;width:13.75px;height:14.29px;background:linear-gradient(#f6f6fa,#e6e6ec);border-radius:1.5px"></div>
<svg style="left:1505.93px;top:953.49px" width="8.09" height="5.66" viewBox="0 0 8 5.6"><path d="M0.8 1.2 L4 4.4 L7.2 1.2" stroke="#c3c3c8" stroke-width="1.5" fill="none"/></svg>
<svg style="left:280.26px;top:567.4px" width="417.5" height="18.6"><rect x="2.58" y="2.58" width="415.55" height="16.65" fill="none" stroke="rgba(70,70,70,.38)" stroke-width="1.95"/><rect x="0.98" y="0.98" width="415.55" height="16.65" fill="none" stroke="#ef0a0a" stroke-width="1.95"/></svg>
<svg style="left:278.65px;top:650.04px" width="416.96" height="88.3"><rect x="2.48" y="2.48" width="415.21" height="86.55" fill="none" stroke="rgba(70,70,70,.38)" stroke-width="1.75"/><rect x="0.88" y="0.88" width="415.21" height="86.55" fill="none" stroke="#ef0a0a" stroke-width="1.75"/></svg>
<svg style="left:49.2px;top:5.8px" width="212.32" height="21.97"><rect x="2.85" y="2.85" width="209.83" height="19.48" fill="none" stroke="rgba(70,70,70,.38)" stroke-width="2.49"/><rect x="1.25" y="1.25" width="209.83" height="19.48" fill="none" stroke="#ef0a0a" stroke-width="2.49"/></svg>
</div></body></html>
